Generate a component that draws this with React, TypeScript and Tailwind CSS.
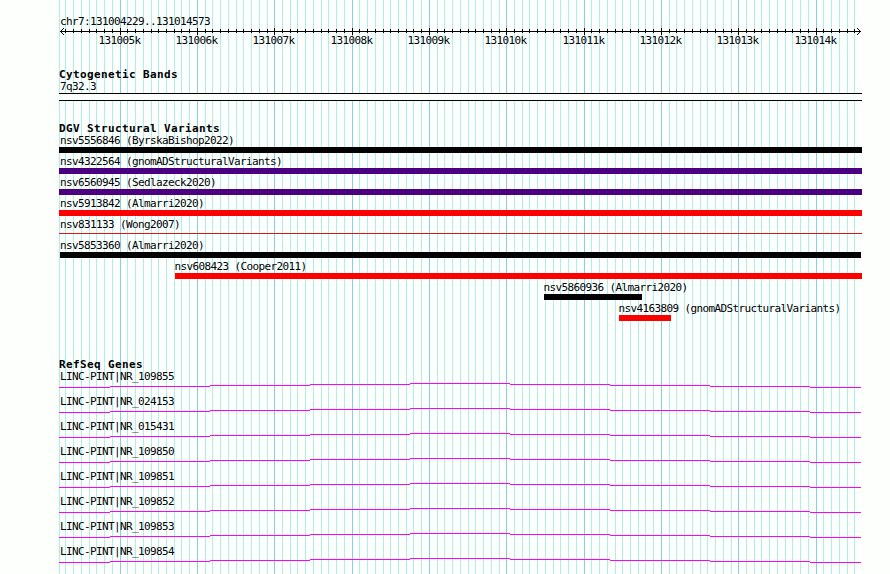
import clsx from "clsx";

const REGION_START = 131004229;
const PIXELS_PER_BASE = 800 / 10345;
const PAD_LEFT = 60;

interface Variant {
	name: string;
	study: string;
	bar: string;
	label: string;
}

const variants: Variant[] = [
	{ name: "nsv5556846", study: "ByrskaBishop2022", bar: "ml-[59px] w-[803px] h-1.5 bg-black", label: "ml-[60px]" },
	{ name: "nsv4322564", study: "gnomADStructuralVariants", bar: "ml-[59px] w-[803px] h-1.5 bg-[#4b0082]", label: "ml-[60px]" },
	{ name: "nsv6560945", study: "Sedlazeck2020", bar: "ml-[59px] w-[803px] h-1.5 bg-[#4b0082]", label: "ml-[60px]" },
	{ name: "nsv5913842", study: "Almarri2020", bar: "ml-[59px] w-[803px] h-1.5 bg-[#ff0000]", label: "ml-[60px]" },
	{ name: "nsv831133", study: "Wong2007", bar: "ml-[59px] mt-0.5 w-[803px] h-px bg-[#dc1414]", label: "ml-[60px]" },
	{ name: "nsv5853360", study: "Almarri2020", bar: "ml-[60px] w-[801px] h-1.5 bg-black", label: "ml-[60px]" },
	{ name: "nsv608423", study: "Cooper2011", bar: "ml-[175px] w-[687px] h-1.5 bg-[#ff0000]", label: "ml-[174.4px]" },
	{ name: "nsv5860936", study: "Almarri2020", bar: "ml-[544px] w-[98px] h-1.5 bg-black", label: "ml-[543.4px]" },
	{ name: "nsv4163809", study: "gnomADStructuralVariants", bar: "ml-[619px] w-[52px] h-1.5 bg-[#ff0000]", label: "ml-[618.4px]" },
];

const transcripts = [
	"NR_109855",
	"NR_024153",
	"NR_015431",
	"NR_109850",
	"NR_109851",
	"NR_109852",
	"NR_109853",
	"NR_109854",
];

const ticks = Array.from({ length: 103 }, (_, i) => {
	const base = 131004300 + i * 100;
	return {
		base,
		x: Math.round(PAD_LEFT + (base - REGION_START) * PIXELS_PER_BASE),
		major: base % 1000 === 0,
	};
});

function Grid() {
	return (
		<svg
			className="absolute inset-0 -z-10"
			width="890"
			height="574"
			shapeRendering="crispEdges"
		>
			<rect x="59" width="1" height="574" fill="#afeeee" />
			{ticks.map(({ base, x, major }) => (
				<rect
					key={base}
					x={x}
					width="1"
					height="574"
					fill={major ? "#87ceeb" : "#afeeee"}
				/>
			))}
		</svg>
	);
}

function Ruler() {
	return (
		<svg className="block" width="890" height="24" viewBox="0 27 890 24">
			<g shapeRendering="crispEdges">
				<rect x="60" y="31" width="801" height="1" />
				{ticks.map(({ base, x, major }) => (
					<rect
						key={base}
						x={x}
						y={major ? 28 : 29}
						width="1"
						height={major ? 7 : 4}
					/>
				))}
				{[1, 2, 3].map((i) => (
					<g key={i}>
						<rect x={60 + i} y={31 - i} width="1" height="1" />
						<rect x={60 + i} y={31 + i} width="1" height="1" />
						<rect x={860 - i} y={31 - i} width="1" height="1" />
						<rect x={860 - i} y={31 + i} width="1" height="1" />
					</g>
				))}
			</g>
			{ticks
				.filter((tick) => tick.major)
				.map(({ base, x }) => (
					<text key={base} x={x - 21.6} y="44">
						{base / 1000}k
					</text>
				))}
		</svg>
	);
}

function TrackTitle({ children }: { children: string }) {
	return (
		<h2 className="ml-[59px] h-3 leading-3.5 font-bold tracking-[0.378px]">
			{children}
		</h2>
	);
}

function VariantRow({ variant }: { variant: Variant }) {
	return (
		<div className="h-[21px]">
			<div className={clsx("h-[13px] leading-3.5", variant.label)}>
				{variant.name} ({variant.study})
			</div>
			<div className={variant.bar} />
		</div>
	);
}

function TranscriptRow({ name }: { name: string }) {
	return (
		<div className="h-[25px]">
			<div className="ml-[60px] h-[13px] leading-3.5">LINC-PINT|{name}</div>
			<svg
				className="block"
				width="890"
				height="5"
				fill="#ff00ff"
				shapeRendering="crispEdges"
			>
				<rect x="59" y="4" width="51" height="1" />
				<rect x="110" y="3" width="100" height="1" />
				<rect x="210" y="2" width="100" height="1" />
				<rect x="310" y="1" width="100" height="1" />
				<rect x="410" y="0" width="100" height="1" />
				<rect x="510" y="1" width="100" height="1" />
				<rect x="610" y="2" width="100" height="1" />
				<rect x="710" y="3" width="100" height="1" />
				<rect x="810" y="4" width="51" height="1" />
			</svg>
		</div>
	);
}

export default function App() {
	return (
		<main className="relative isolate h-[574px] w-[890px] overflow-hidden bg-[#fdfffd] font-['DejaVu_Sans_Mono',monospace] text-[11px] tracking-[-0.622px] whitespace-pre text-black">
			<Grid />
			<div className="mt-3.5 ml-[60px] h-[13px] leading-4">
				chr7:131004229..131014573
			</div>
			<Ruler />

			<section className="mt-[17px] h-[54px]">
				<TrackTitle>Cytogenetic Bands</TrackTitle>
				<div className="ml-[60px] h-[13px] leading-[13px]">7q32.3</div>
				<div className="ml-[59px] h-2 w-[803px] border-y border-black bg-[#fdfffd]" />
			</section>

			<section className="h-[236px]">
				<TrackTitle>DGV Structural Variants</TrackTitle>
				{variants.map((variant) => (
					<VariantRow key={variant.name} variant={variant} />
				))}
			</section>

			<section>
				<TrackTitle>RefSeq Genes</TrackTitle>
				{transcripts.map((name) => (
					<TranscriptRow key={name} name={name} />
				))}
			</section>
		</main>
	);
}
